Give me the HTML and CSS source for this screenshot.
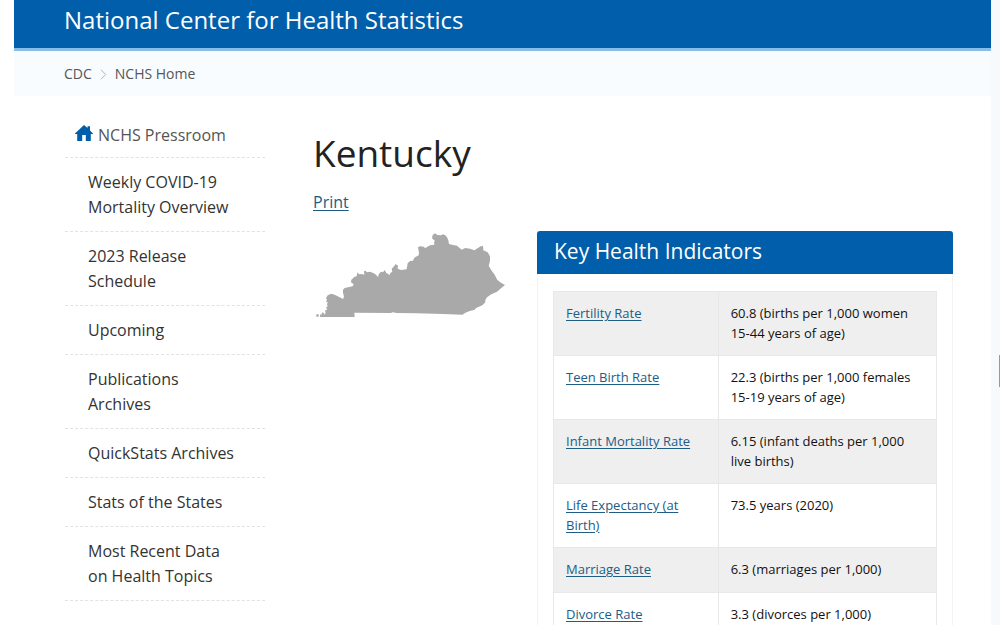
FILE: index.html
```html
<!DOCTYPE html>
<html lang="en">
<head>
<meta charset="utf-8">
<title>Kentucky - National Center for Health Statistics</title>
<link rel="stylesheet" href="styles.css">
</head>
<body>
<div class="shell">
  <div class="page">
    <header class="site-header"><a class="site-title" href="#">National Center for Health Statistics</a></header>
    <nav class="breadcrumb" aria-label="Breadcrumb">
      <a href="#">CDC</a>
      <svg class="chevron" viewBox="0 0 8 14" aria-hidden="true"><path d="M1 1.5L6.5 7L1 12.5"/></svg>
      <a href="#">NCHS Home</a>
    </nav>
    <div class="columns">
      <nav class="side-nav" aria-label="Section">
        <a class="side-home" href="#">
          <svg class="home-icon" viewBox="0 0 18 16" aria-hidden="true"><path d="M9 0L12.5 3V1.200H15V5.400L18 8.500V9H15.800V16H10.800V10H7.200V16H2.200V9H0V8.500Z"/></svg>
          <span>NCHS Pressroom</span>
        </a>
        <ul class="side-list">
          <li><a href="#">Weekly COVID-19 Mortality Overview</a></li>
          <li><a href="#">2023 Release Schedule</a></li>
          <li><a href="#">Upcoming</a></li>
          <li><a href="#">Publications Archives</a></li>
          <li><a href="#">QuickStats Archives</a></li>
          <li><a href="#">Stats of the States</a></li>
          <li><a href="#">Most Recent Data on Health Topics</a></li>
        </ul>
      </nav>
      <main class="content">
        <h1>Kentucky</h1>
        <a class="print" href="#">Print</a>
        <div class="state">
          <svg class="state-map" viewBox="18 24 567 255" role="img" aria-label="Map of Kentucky"><path d="M19 268H26V275H19ZM30 276L31 267L35 269L36 262L41 264L44 269L47 262L45 256L52 254L48 248L53 244L51 238L53 232L48 229L51 224L48 219L53 211L64 206L74 209L86 215L99 222L102 215L99 203L99 194L104 189L128 184L131 178L123 172L124 164L134 155L140 154L142 142L147 148L155 147L163 149L162 139L167 137L170 142L180 140L190 144L198 149L204 156L207 146L213 140L219 142L224 135L229 144L236 148L239 151L241 144L247 140L245 131L251 125L257 117L264 122L263 131L273 135L290 133L293 115L300 108L309 107L313 98L326 91L327 83L324 67L330 64L342 65L345 70L360 61L373 59L372 51L375 48L366 40L368 30L375 25L382 30L393 31L399 28L406 31L411 37L415 46L417 57L429 60L441 62L455 74L466 69L480 71L493 76L505 68L512 64L519 63L520 76L533 82L540 94L540 108L536 122L545 137L554 149L562 165L573 173L585 180L573 190L561 200L544 208L531 217L526 225L526 232L517 241L505 246L498 249L494 254L479 258L465 264L457 269L400 267L320 265L260 264L249 262L242 264L133 263L134 276Z"/></svg>
          <section class="card">
            <h2>Key Health Indicators</h2>
            <div class="card-body">
              <table>
                <tbody>
                <tr><th scope="row"><a href="#">Fertility Rate</a></th><td>60.8 (births per 1,000 women 15-44 years of age)</td></tr>
                <tr><th scope="row"><a href="#">Teen Birth Rate</a></th><td>22.3 (births per 1,000 females 15-19 years of age)</td></tr>
                <tr><th scope="row"><a href="#">Infant Mortality Rate</a></th><td>6.15 (infant deaths per 1,000 live births)</td></tr>
                <tr><th scope="row"><a href="#">Life Expectancy (at Birth)</a></th><td>73.5 years (2020)</td></tr>
                <tr><th scope="row"><a href="#">Marriage Rate</a></th><td>6.3 (marriages per 1,000)</td></tr>
                <tr><th scope="row"><a href="#">Divorce Rate</a></th><td>3.3 (divorces per 1,000)</td></tr>
                </tbody>
              </table>
            </div>
          </section>
        </div>
      </main>
    </div>
  </div>
  <div class="track"><div class="thumb"></div></div>
</div>
</body>
</html>
```
FILE: styles.css
```css
* { box-sizing: border-box; }
body { margin: 0; background: #fff; color: #111; font-family: "Open Sans", "Noto Sans", sans-serif; font-size: 16px; }
.shell { display: flex; height: 100vh; padding-left: 14px; overflow: hidden; }
.page { flex: 1; min-width: 0; }
.track { display: flex; flex: none; width: 9px; justify-content: flex-end; align-items: flex-start; padding-top: 355px; background: #f8f9fd; }
.thumb { width: 1px; height: 32px; background: #999; }
.site-header { padding: 3px 50px 12px; background: #005eaa; border-bottom: 3px solid #88bde6; }
.site-title { display: block; color: #fff; font-size: 24px; line-height: 33px; text-decoration: none; }
.breadcrumb { display: flex; align-items: center; gap: 8px; padding: 13px 50px 12px; background: #f8fcff; font-size: 14px; line-height: 20px; }
.breadcrumb a { color: #555; text-decoration: none; }
.chevron { width: 7px; height: 13px; fill: none; stroke: #aaa; stroke-width: 1; }
.columns { display: flex; gap: 48px; padding: 26px 38px 0 51px; }
.side-nav { flex: none; width: 200px; line-height: 25px; }
.side-home { display: flex; align-items: flex-start; gap: 5px; padding: 1px 10px 9px; border-bottom: 1px dashed #e2e2e2; color: #555; text-decoration: none; }
.home-icon { width: 18px; height: 16px; margin-top: 2px; fill: #005eaa; }
.side-list { margin: 0; padding: 0; list-style: none; }
.side-list a { display: block; padding: 12px 24px 11px 23px; border-bottom: 1px dashed #e2e2e2; color: #333; text-decoration: none; }
.content { flex: 1; min-width: 0; }
h1 { margin: 5px 0 11px; font-size: 37px; font-weight: 400; line-height: 52px; color: #222; }
.print { display: block; width: fit-content; line-height: 25px; }
.print, th a { color: #205d86; text-underline-offset: 2px; }
.state { display: flex; justify-content: space-between; align-items: flex-start; margin-top: 16px; }
.state-map { flex: none; width: 189px; height: 85px; margin: 2px 0 0 3px; fill: #a9a9a9; }
.card { width: 65%; border: 1px solid #f3f3f3; border-top: 0; border-radius: 3px 3px 0 0; }
.card h2 { margin: 0 -1px; padding: 5px 17px 8px; border-radius: 3px 3px 0 0; background: #005eaa; color: #fff; font-size: 21px; font-weight: 500; line-height: 30px; }
.card-body { padding: 17px 15px; }
table { width: 100%; border-collapse: collapse; font-size: 13px; line-height: 1.5; color: #111; }
th, td { padding: 12px; border: 1px solid #e8e8e8; font-weight: 400; text-align: left; vertical-align: top; }
th { width: 43%; }
tr:nth-child(odd) { background: #efefef; }
```
